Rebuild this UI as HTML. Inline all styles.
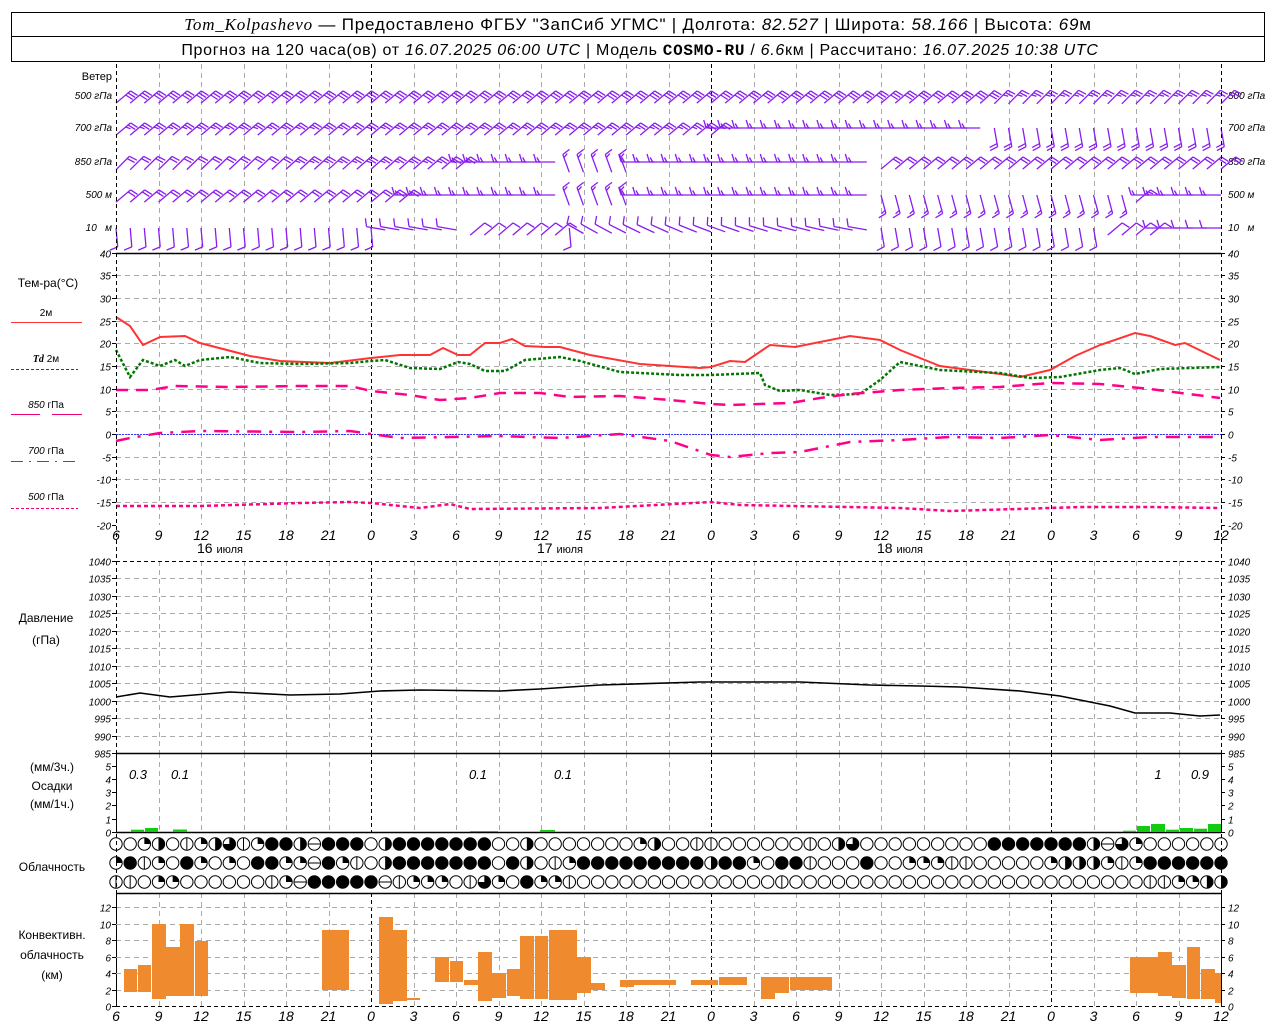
<!DOCTYPE html>
<html><head><meta charset="utf-8"><style>
body{margin:0;background:#fff;width:1280px;height:1024px;overflow:hidden}
svg{display:block}
text{font-family:"Liberation Sans","DejaVu Sans",sans-serif;fill:#000}
.it{font-style:italic}
</style></head><body>
<svg id="s" width="1280" height="1024" xmlns="http://www.w3.org/2000/svg">
<rect x="11.5" y="12.5" width="1253" height="49" fill="none" stroke="#000"/>
<line x1="11" y1="36.5" x2="1265" y2="36.5" stroke="#000"/>
<text x="638" y="30" text-anchor="middle" font-size="17" letter-spacing="0.8"><tspan font-family="Liberation Serif" font-style="italic">Tom_Kolpashevo</tspan> — Предоставлено ФГБУ "ЗапСиб УГМС" | Долгота: <tspan font-style="italic">82.527</tspan> | Широта: <tspan font-style="italic">58.166</tspan> | Высота: <tspan font-style="italic">69</tspan>м</text>
<text x="640" y="55" text-anchor="middle" font-size="16" letter-spacing="0.7">Прогноз на 120 часа(ов) от <tspan font-style="italic">16.07.2025 06:00 UTC</tspan>  | Модель <tspan font-family="Liberation Mono" font-weight="bold">COSMO-RU</tspan> / <tspan font-style="italic">6.6</tspan>км | Рассчитано: <tspan font-style="italic">16.07.2025 10:38 UTC</tspan></text>
<g id="g"></g>
</svg>
<script>
var g=document.getElementById('g'),out='';
function X(h){return 116+h*1105/78;}
function L(x1,y1,x2,y2,st){out+='<line x1="'+x1+'" y1="'+y1+'" x2="'+x2+'" y2="'+y2+'" '+st+'/>';}
function T(x,y,t,sz,anc,cls){out+='<text x="'+x+'" y="'+y+'" font-size="'+sz+'" text-anchor="'+(anc||'start')+'"'+(cls?' class="'+cls+'"':'')+'>'+t+'</text>';}
var gray='stroke="#aaa" stroke-dasharray="5,4" stroke-width="1"';
var blk='stroke="#000" stroke-dasharray="4,3" stroke-width="1"';
var panels=[[64,253],[253,525],[561,753],[753,832],[893,1006]];
for(var h=0;h<=78;h+=3){var x=Math.round(X(h))+0.5;var isz=((h+6)%24==0);
 panels.forEach(function(p){L(x,p[0],x,p[1],(isz||h==0||h==78)?blk:gray);});}
function hgrid(y0,y1,vals,fn){vals.forEach(function(v){var y=Math.round(fn(v))+0.5;
 if(y>y0+1&&y<y1-1)L(116,y,1221,y,gray);
 L(112,y,116,y,'stroke="#000"');L(1221,y,1225,y,'stroke="#000"');
 T(111,y+4,v,10,'end','it');T(1228,y+4,v,10,'start','it');});}
var ty=function(t){return 434-t*4.533;};
hgrid(253,525,[40,35,30,25,20,15,10,5,0,-5,-10,-15,-20],ty);
var py=function(p){return 561+(1040-p)*3.49;};
hgrid(561,753,[1040,1035,1030,1025,1020,1015,1010,1005,1000,995,990,985],py);
var ry=function(v){return 832-v*13.3;};
[5,4,3,2,1,0].forEach(function(v){var y=Math.round(ry(v))+0.5;L(112,y,116,y,'stroke="#000"');L(1221,y,1225,y,'stroke="#000"');T(111,y+4,v,10,'end','it');T(1228,y+4,v,10,'start','it');});
var cy=function(k){return 1006-k*8.25;};
hgrid(893,1006,[12,10,8,6,4,2,0],cy);
[253.5,753.5,832.5,893.5].forEach(function(y){L(116,y,1221,y,'stroke="#000" stroke-width="1.5"');});
L(116,1006.5,1221,1006.5,blk);L(116,561.5,1221,561.5,blk);
for(var h=0;h<=78;h+=3){var lb=(h+6)%24;T(X(h),540,lb,14,'middle','it');T(X(h),1021,lb,14,'middle','it');}
T(220,553,'16 <tspan font-size="11">июля</tspan>',14,'middle');T(560,553,'17 <tspan font-size="11">июля</tspan>',14,'middle');T(900,553,'18 <tspan font-size="11">июля</tspan>',14,'middle');
T(112,80,'Ветер',11,'end');
[['500 гПа',99],['700 гПа',131],['850 гПа',165],['500 м',198],['10 &#160; м',231]].forEach(function(a){T(112,a[1],a[0],10,'end','it');T(1228,a[1],a[0],10,'start','it');});
T(48,287,'Тем-ра(°C)',12,'middle');
T(46,316,'2м',10,'middle');L(11,322.5,82,322.5,'stroke="#f33" stroke-width="1"');
T(46,362,'<tspan class="it" font-family="Liberation Serif" font-weight="bold">Td</tspan>  2м',10,'middle');L(11,369.5,78,369.5,'stroke="#060" stroke-dasharray="3,2"');
T(46,408,'<tspan class="it">850</tspan> гПа',10,'middle');L(11,414.5,40,414.5,'stroke="#e07"');L(52,414.5,82,414.5,'stroke="#e07"');
T(46,454,'<tspan class="it">700</tspan> гПа',10,'middle');L(11,461.5,78,461.5,'stroke="#e07" stroke-dasharray="12,6,2,6"');
T(46,500,'<tspan class="it">500</tspan> гПа',10,'middle');L(11,508.5,78,508.5,'stroke="#e07" stroke-dasharray="3,2"');
T(46,622,'Давление',12,'middle');T(46,644,'(гПа)',12,'middle');
T(52,771,'(мм/3ч.)',12,'middle');T(52,790,'Осадки',12,'middle');T(52,808,'(мм/1ч.)',12,'middle');
T(52,871,'Облачность',12,'middle');
T(52,939,'Конвективн.',12,'middle');T(52,959,'облачность',12,'middle');T(52,979,'(км)',12,'middle');
L(116,434.5,1221,434.5,'stroke="#33f" stroke-width="1" stroke-dasharray="2,1"');
function poly(pts,st){out+='<polyline fill="none" points="'+pts.join(' ')+'" '+st+'/>';}
poly([116,317,130,326,143,345,160,337,185,336,200,343,250,356,280,361,330,363,371,358,400,355,430,355,443,348,458,355,470,355,485,343,500,343,512,339,525,346,545,347,560,347,590,355,640,364,700,368,711,367,730,361,745,362,770,345,795,347,850,336,880,340,900,350,940,366,1000,374,1020,377,1050,370,1075,356,1100,345,1135,333,1150,336,1175,345,1185,343,1220,360],'stroke="#f33" stroke-width="2"');
poly([116,350,130,377,143,360,160,366,175,360,185,366,200,360,230,357,260,363,300,364,350,363,371,361,385,360,410,368,440,369,458,362,470,364,485,371,505,371,525,360,560,357,580,361,620,372,680,375,711,375,760,373,765,385,780,391,800,390,830,395,860,394,880,380,900,362,940,370,1000,373,1030,378,1060,377,1100,370,1120,368,1135,374,1160,369,1220,367],'stroke="#070" stroke-width="2.5" stroke-dasharray="3,2"');
poly([116,390,150,390,175,386,230,387,300,386,350,386,371,391,410,395,440,400,470,398,500,393,540,393,570,397,620,396,670,400,711,404,730,405,790,403,820,398,850,394,900,390,950,388,1000,387,1050,383,1100,384,1150,389,1220,398],'stroke="#f08" stroke-width="2.5" stroke-dasharray="12,8"');
poly([116,441,130,438,160,433,200,431,300,432,350,431,371,434,400,438,450,437,500,436,560,438,620,434,670,441,711,455,730,457,770,453,800,452,850,442,900,440,950,437,1000,438,1050,435,1100,440,1150,437,1220,437],'stroke="#f08" stroke-width="2.5" stroke-dasharray="14,8,3,8"');
poly([116,506,200,506,300,503,350,502,371,503,420,508,450,504,470,509,600,508,711,502,740,505,900,508,950,511,1050,508,1080,507,1150,507,1220,508],'stroke="#f08" stroke-width="2.5" stroke-dasharray="4,3"');
poly([116,697,140,693,170,697,230,692,290,695,340,694,380,691,420,690,500,691,540,689,600,685,700,682,800,682,870,685,920,686,960,687,1020,691,1060,696,1110,706,1135,713,1170,713,1200,716,1220,715],'stroke="#000" stroke-width="1.6"');
[[131,144,2.3],[145,158,4],[173,187,2.5],[470,484,1],[484,498,1],[540,555,2],[1123,1136,1.3],[1137,1150,6],[1151,1165,8],[1166,1179,2.3],[1180,1193,4],[1194,1207,3.3],[1208,1221,8]].forEach(function(b){out+='<rect x="'+b[0]+'" y="'+(832-b[2])+'" width="'+(b[1]-b[0])+'" height="'+b[2]+'" fill="#1c1"/>';});
[['0.3',138],['0.1',180],['0.1',478],['0.1',563],['1',1158],['0.9',1200]].forEach(function(a){T(a[1],779,a[0],13,'middle','it');});
[[124,137,969,992],[138,151,965,992],[152,166,924,999],[166,180,947,996],[180,194,924,996],[195,208,941,996],[322,349,930,990],[379,393,917,1004],[393,407,930,1001],[407,420,998,1000],[435,449,957,982],[450,463,961,982],[464,478,980,985],[478,492,952,1001],[492,506,973,998],[507,520,969,996],[520,534,936,999],[535,548,936,999],[549,577,930,1000],[577,591,957,993],[591,605,983,990],[620,634,980,987],[634,676,980,985],[691,705,980,985],[705,718,980,985],[719,747,977,985],[761,775,977,999],[775,789,977,993],[790,832,977,990],[1130,1158,957,993],[1158,1172,952,996],[1172,1186,965,998],[1187,1200,947,999],[1201,1215,969,999],[1215,1221,973,1003]].forEach(function(b){out+='<rect x="'+b[0]+'" y="'+b[2]+'" width="'+(b[1]-b[0])+'" height="'+(b[3]-b[2])+'" fill="#f08a2e"/>';});
var rows=['00qh0vqhtvqffhmfff0hfffffff00h0000000'+'qh00vv000000v0ht000000000fffffffhmtq00000',
'qfvq0fq0q0ffqqmfqv0hfffffff0fh0vqffff'+'fffffhffq0ffv000f00qqqvv00000qhhhqvqffffff',
'vv0qq000000vqmfffffmvqqq0vtq0fqqv0000'+'0000000000v0000000000000000000000000vvqqhh'];
var ryy=[844,863,882];
rows.forEach(function(r,ri){for(var i=0;i<79;i++){var c=r[i]||'0',x=X(i),y=ryy[ri],rr=6.2;
 var s='<circle cx="'+x+'" cy="'+y+'" r="'+rr+'" fill="'+(c=='f'?'#000':'#fff')+'" stroke="#000" stroke-width="1"/>';
 if(c=='v')s+='<line x1="'+x+'" y1="'+(y-rr)+'" x2="'+x+'" y2="'+(y+rr)+'" stroke="#000"/>';
 if(c=='m')s+='<line x1="'+(x-rr)+'" y1="'+y+'" x2="'+(x+rr)+'" y2="'+y+'" stroke="#000"/>';
 if(c=='q')s+='<path d="M'+x+' '+y+'V'+(y-rr)+'A'+rr+' '+rr+' 0 0 1 '+(x+rr)+' '+y+'Z" fill="#000"/>';
 if(c=='h')s+='<path d="M'+x+' '+(y-rr)+'A'+rr+' '+rr+' 0 0 1 '+x+' '+(y+rr)+'Z" fill="#000"/>';
 if(c=='t')s+='<path d="M'+x+' '+y+'V'+(y-rr)+'A'+rr+' '+rr+' 0 1 1 '+(x-rr)+' '+y+'Z" fill="#000"/>';
 out+=s;}});
var lv=[[96,[[0,40,3],[60,40,3],[62,45,2.5],[78,45,2.5]]],
[128,[[0,40,2.5],[42,40,2.5],[43,180,1.5],[61,180,1.5],[62,-80,2],[78,-80,2]]],
[162,[[0,45,2],[24,40,2.5],[25,180,1.5],[31,180,1.5],[32,110,1.5],[36,110,1.5],[37,180,1.5],[53,180,1.5],[54,40,2],[78,40,2]]],
[195,[[0,40,2],[20,40,2],[21,180,1.5],[31,180,1.5],[32,110,1.5],[36,110,1.5],[37,180,1.5],[53,180,1.5],[54,-75,1.5],[71,-75,1.5],[72,40,1.5],[73,180,1.5],[78,180,1.5]]],
[228,[[0,-85,1],[18,-85,1],[19,170,1],[24,170,1],[25,40,1],[31,40,1],[32,-85,1],[33,150,1],[53,170,1],[54,-80,1],[69,-80,1],[70,40,1],[73,40,1],[74,180,1],[78,180,1]]]];
function interp(k,h){for(var i=0;i<k.length-1;i++){if(h>=k[i][0]&&h<=k[i+1][0]){var f=(h-k[i][0])/((k[i+1][0]-k[i][0])||1);return [k[i][1]+(k[i+1][1]-k[i][1])*f,k[i][2]+(k[i+1][2]-k[i][2])*f];}}return [k[k.length-1][1],k[k.length-1][2]];}
var pc='stroke="#8a1cf0" stroke-width="1.3"';
lv.forEach(function(l){for(var h=0;h<=78;h++){var v=interp(l[1],h),a=v[0]*Math.PI/180,n=Math.round(v[1]*2)/2;
 var len=19,dx=Math.cos(a),dy=-Math.sin(a);
 var x=X(h),y=l[0]+Math.max(0,Math.sin(a))*11,ex=x+dx*len,ey=y+dy*len;
 L(x.toFixed(1),y.toFixed(1),ex.toFixed(1),ey.toFixed(1),pc);
 var px=-dy,py=dx;
 for(var b=0;b<Math.ceil(n);b++){var bl=(b<Math.floor(n))?8:4.5;var sx=ex-dx*b*3.2,sy=ey-dy*b*3.2;
  L(sx.toFixed(1),sy.toFixed(1),(sx+px*bl+dx*2.5).toFixed(1),(sy+py*bl+dy*2.5).toFixed(1),pc);}}});
L(116.5,64,116.5,1006,blk);L(1221.5,64,1221.5,1006,blk);
g.innerHTML=out;
</script>
</body></html>
